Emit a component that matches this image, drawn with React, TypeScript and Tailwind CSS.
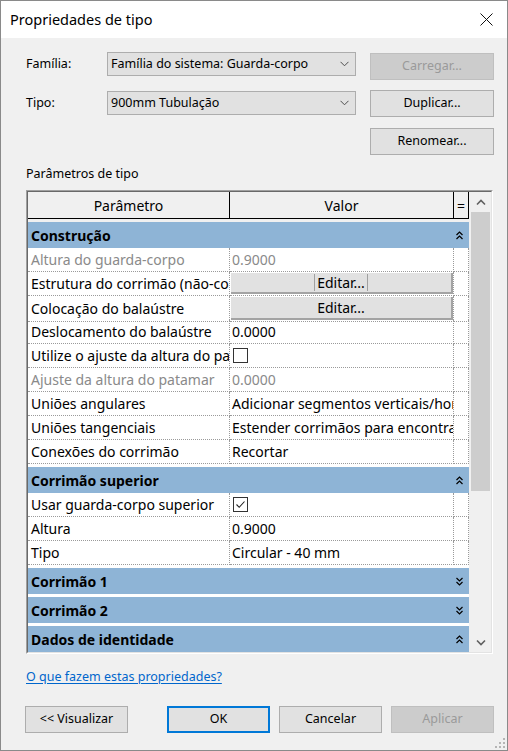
import type { ReactNode } from 'react';

type Value =
  | { kind: 'text'; text: string; muted?: boolean }
  | { kind: 'edit'; focused?: boolean }
  | { kind: 'check'; checked: boolean };

interface ParamRow {
  label: string;
  muted?: boolean;
  value: Value;
}

interface ParamGroup {
  title: string;
  expanded: boolean;
  rows: ParamRow[];
}

const groups: ParamGroup[] = [
  {
    title: 'Construção',
    expanded: true,
    rows: [
      { label: 'Altura do guarda-corpo', muted: true, value: { kind: 'text', text: '0.9000', muted: true } },
      { label: 'Estrutura do corrimão (não-contínuo)', value: { kind: 'edit', focused: true } },
      { label: 'Colocação do balaústre', value: { kind: 'edit' } },
      { label: 'Deslocamento do balaústre', value: { kind: 'text', text: '0.0000' } },
      { label: 'Utilize o ajuste da altura do patamar', value: { kind: 'check', checked: false } },
      { label: 'Ajuste da altura do patamar', muted: true, value: { kind: 'text', text: '0.0000', muted: true } },
      { label: 'Uniões angulares', value: { kind: 'text', text: 'Adicionar segmentos verticais/horizontais' } },
      { label: 'Uniões tangenciais', value: { kind: 'text', text: 'Estender corrimãos para encontrar' } },
      { label: 'Conexões do corrimão', value: { kind: 'text', text: 'Recortar' } },
    ],
  },
  {
    title: 'Corrimão superior',
    expanded: true,
    rows: [
      { label: 'Usar guarda-corpo superior', value: { kind: 'check', checked: true } },
      { label: 'Altura', value: { kind: 'text', text: '0.9000' } },
      { label: 'Tipo', value: { kind: 'text', text: 'Circular - 40 mm' } },
    ],
  },
  { title: 'Corrimão 1', expanded: false, rows: [] },
  { title: 'Corrimão 2', expanded: false, rows: [] },
  { title: 'Dados de identidade', expanded: true, rows: [] },
];

const SelectChevron = () => (
  <svg className="shrink-0" height="6" viewBox="0 0 9 6" width="9">
    <path d="M0.5 0.8 L4.5 4.8 L8.5 0.8" fill="none" stroke="#4d4d4d" strokeWidth="1" />
  </svg>
);

const DoubleChevron = ({ up }: { up: boolean }) => (
  <svg height="9" viewBox="0 0 7 9" width="7">
    {up ? (
      <path d="M0.5 4 L3.5 1 L6.5 4 M0.5 8 L3.5 5 L6.5 8" fill="none" stroke="#000" strokeWidth="1.2" />
    ) : (
      <path d="M0.5 1 L3.5 4 L6.5 1 M0.5 5 L3.5 8 L6.5 5" fill="none" stroke="#000" strokeWidth="1.2" />
    )}
  </svg>
);

const Select = ({ text }: { text: string }) => (
  <div className="flex h-[24px] w-[249px] items-center justify-between border border-[#adadad] bg-[#e1e1e1] pr-[6px] pl-[3px] text-[12.5px] text-black">
    <span>{text}</span>
    <SelectChevron />
  </div>
);

const Button = ({
  children,
  width,
  disabled,
  primary,
}: {
  children: ReactNode;
  width: string;
  disabled?: boolean;
  primary?: boolean;
}) => {
  const look = disabled
    ? 'border border-[#bfbfbf] bg-[#cccccc] text-[#9a9a9a]'
    : primary
      ? 'border-2 border-[#0078d7] bg-[#e1e1e1] text-black'
      : 'border border-[#adadad] bg-[#e1e1e1] text-black';
  return (
    <div className={`flex h-[27px] items-center justify-center text-[12.5px] ${width} ${look}`}>{children}</div>
  );
};

const ValueCell = ({ value }: { value: Value }) => {
  if (value.kind === 'edit') {
    return (
      <div className="flex h-full items-stretch border-[#9a9a9a] border-r border-b border-dotted py-[1px] pl-[1px]">
        <div className="flex flex-1 items-center justify-center border-[#a3a3a3] border-r-2 border-b-2 bg-[#e1e1e1] text-[14px] text-black">
          {value.focused ? (
            <div className="flex h-[17px] items-center border-[#a0a0a0] border-x px-[2px]">Editar...</div>
          ) : (
            <span>Editar...</span>
          )}
        </div>
      </div>
    );
  }
  if (value.kind === 'check') {
    return (
      <div className="flex h-full items-center border-[#9a9a9a] border-r border-b border-dotted pl-[3px]">
        <div className="flex h-[15px] w-[15px] items-center justify-center border border-[#333] bg-white">
          {value.checked && (
            <svg height="11" viewBox="0 0 11 11" width="11">
              <path d="M1.5 5.5 L4.2 8.3 L9.5 2.5" fill="none" stroke="#222" strokeWidth="1.1" />
            </svg>
          )}
        </div>
      </div>
    );
  }
  return (
    <div
      className={`flex h-full items-center overflow-hidden whitespace-nowrap border-[#9a9a9a] border-r border-b border-dotted pl-[2px] text-[14px] ${value.muted ? 'text-[#8a8a8a]' : 'text-black'}`}
    >
      {value.text}
    </div>
  );
};

const DataRow = ({ row }: { row: ParamRow }) => (
  <div className="grid h-[24px] shrink-0 grid-cols-[202px_224px_15px]">
    <div
      className={`flex h-full items-center overflow-hidden whitespace-nowrap border-[#9a9a9a] border-r border-b border-dotted pl-[3px] text-[14px] ${row.muted ? 'text-[#8a8a8a]' : 'text-black'}`}
    >
      {row.label}
    </div>
    <ValueCell value={row.value} />
    <div className="h-full border-[#9a9a9a] border-r border-b border-dotted" />
  </div>
);

const GroupHeader = ({ group, first }: { group: ParamGroup; first: boolean }) => (
  <div
    className={`flex h-[26px] shrink-0 items-center justify-between bg-[#8eb4d6] pr-[6px] pl-[3px] font-bold text-[14px] text-black ${first ? '' : 'mt-[3px]'}`}
  >
    <span>{group.title}</span>
    <DoubleChevron up={group.expanded} />
  </div>
);

const Scrollbar = () => (
  <div className="flex w-[22px] flex-col bg-[#f0f0f0] pr-[1px] pl-[2px]">
    <div className="flex h-[20px] shrink-0 items-center justify-center">
      <svg height="7" viewBox="0 0 10 7" width="10">
        <path d="M1 5.5 L5 1.5 L9 5.5" fill="none" stroke="#606060" strokeWidth="1.6" />
      </svg>
    </div>
    <div className="h-[279px] shrink-0 bg-[#cdcdcd]" />
    <div className="flex-1" />
    <div className="flex h-[20px] shrink-0 items-center justify-center">
      <svg height="7" viewBox="0 0 10 7" width="10">
        <path d="M1 1.5 L5 5.5 L9 1.5" fill="none" stroke="#606060" strokeWidth="1.6" />
      </svg>
    </div>
  </div>
);

const PropertyGrid = () => (
  <div className="mt-[6px] w-[467px] border-[#a0a0a0] border-t border-r-white border-b-white border-l border-r border-b">
    <div className="flex h-[462px] border-[#696969] border-t border-r-[#e3e3e3] border-b-[#e3e3e3] border-l border-r border-b">
      <div className="flex h-[460px] w-[441px] flex-col overflow-hidden bg-white">
        <div className="grid h-[27px] shrink-0 grid-cols-[202px_224px_15px] border-black border-b bg-[#f0f0f0] text-[14px] text-black">
          <div className="flex items-center justify-center border-black border-r">Parâmetro</div>
          <div className="flex items-center justify-center border-black border-r">Valor</div>
          <div className="flex items-center justify-center border-black border-r">=</div>
        </div>
        <div className="h-[3px] shrink-0 bg-[#f0f0f0]" />
        {groups.map((group, i) => (
          <div className="flex shrink-0 flex-col" key={group.title}>
            <GroupHeader first={i === 0} group={group} />
            {group.rows.map((row) => (
              <DataRow key={row.label} row={row} />
            ))}
          </div>
        ))}
      </div>
      <Scrollbar />
    </div>
  </div>
);

export default function App() {
  return (
    <div className="relative flex h-[751px] w-[508px] flex-col border border-[#8a8a8a] bg-[#f0f0f0] font-['Noto_Sans',sans-serif] text-black">
      <div className="flex h-[37px] shrink-0 items-center justify-between bg-white pr-[14px] pl-[9px]">
        <span className="text-[14.5px]">Propriedades de tipo</span>
        <svg height="13" viewBox="0 0 13 13" width="13">
          <path d="M0.5 0.5 L12.5 12.5 M12.5 0.5 L0.5 12.5" fill="none" stroke="#111" strokeWidth="1" />
        </svg>
      </div>

      <div className="flex flex-1 flex-col pr-[13px] pl-[25px]">
        <div className="mt-[14px] flex items-start">
          <div className="flex h-[24px] w-[81px] items-center text-[12.5px]">Família:</div>
          <Select text="Família do sistema: Guarda-corpo" />
          <div className="mt-[1px] ml-[14px]">
            <Button disabled width="w-[124px]">
              Carregar...
            </Button>
          </div>
        </div>

        <div className="mt-[10px] flex items-start">
          <div className="mt-[1px] flex h-[24px] w-[81px] items-center text-[12.5px]">Tipo:</div>
          <div className="mt-[1px]">
            <Select text="900mm Tubulação" />
          </div>
          <div className="ml-[14px]">
            <Button width="w-[124px]">Duplicar...</Button>
          </div>
        </div>

        <div className="mt-[11px] flex justify-end">
          <Button width="w-[124px]">Renomear...</Button>
        </div>

        <div className="mt-[9px] flex h-[20px] items-center text-[12.5px]">Parâmetros de tipo</div>

        <PropertyGrid />

        <div className="mt-[13px] flex h-[20px] items-center">
          <span className="text-[12.5px] text-[#0066cc] underline underline-offset-2">
            O que fazem estas propriedades?
          </span>
        </div>

        <div className="mt-[19px] flex">
          <div className="-ml-[1px]">
            <Button width="w-[103px]">&lt;&lt; Visualizar</Button>
          </div>
          <div className="ml-[39px]">
            <Button primary width="w-[103px]">
              OK
            </Button>
          </div>
          <div className="ml-[9px]">
            <Button width="w-[103px]">Cancelar</Button>
          </div>
          <div className="ml-[9px]">
            <Button disabled width="w-[103px]">
              Aplicar
            </Button>
          </div>
        </div>
      </div>

      <svg className="absolute right-[1px] bottom-[1px]" height="12" viewBox="0 0 12 12" width="12">
        <rect fill="#b5b5b5" height="2" width="2" x="9" y="1" />
        <rect fill="#b5b5b5" height="2" width="2" x="5" y="5" />
        <rect fill="#b5b5b5" height="2" width="2" x="9" y="5" />
        <rect fill="#b5b5b5" height="2" width="2" x="1" y="9" />
        <rect fill="#b5b5b5" height="2" width="2" x="5" y="9" />
        <rect fill="#b5b5b5" height="2" width="2" x="9" y="9" />
      </svg>
    </div>
  );
}
